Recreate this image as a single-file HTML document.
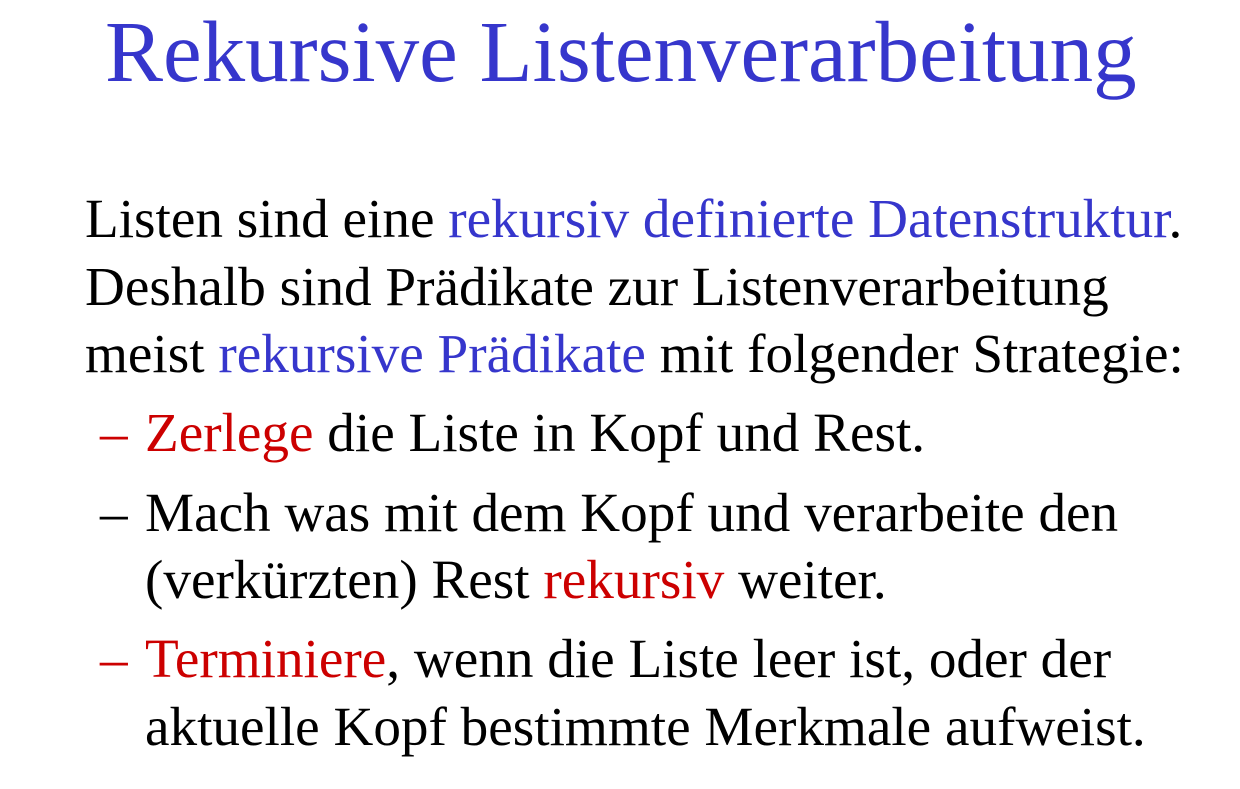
<!DOCTYPE html>
<html><head><meta charset="utf-8"><style>
html,body{margin:0;padding:0;background:#fff;width:1240px;height:789px;overflow:hidden}
body{position:relative;font-family:"Liberation Serif","DejaVu Serif",serif;color:#000}
.l{position:absolute;white-space:nowrap;font-size:55.2px;line-height:67px}
.b{color:#3636cc}.r{color:#cc0000}
.t{position:absolute;left:105px;top:8px;font-size:87px;line-height:87px;color:#3636cc;white-space:nowrap}
.d{position:absolute;left:100px}
</style></head><body>
<div class="t">Rekursive Listenverarbeitung</div>
<div class="l" style="left:85px;top:185px">Listen sind eine <span class="b">rekursiv definierte Datenstruktur</span>.</div>
<div class="l" style="left:85px;top:253px">Deshalb sind Prädikate zur Listenverarbeitung</div>
<div class="l" style="left:85px;top:320px">meist <span class="b">rekursive Prädikate</span> mit folgender Strategie:</div>
<div class="l" style="left:0;top:399px;width:1240px"><span class="d r">–</span><span style="position:absolute;left:145px"><span class="r">Zerlege</span> die Liste in Kopf und Rest.</span></div>
<div class="l" style="left:0;top:479px;width:1240px"><span class="d">–</span><span style="position:absolute;left:145px">Mach was mit dem Kopf und verarbeite den</span></div>
<div class="l" style="left:145px;top:546px">(verkürzten) Rest <span class="r">rekursiv</span> weiter.</div>
<div class="l" style="left:0;top:625px;width:1240px"><span class="d r">–</span><span style="position:absolute;left:145px"><span class="r">Terminiere</span>, wenn die Liste leer ist, oder der</span></div>
<div class="l" style="left:145px;top:693px">aktuelle Kopf bestimmte Merkmale aufweist.</div>
</body></html>
